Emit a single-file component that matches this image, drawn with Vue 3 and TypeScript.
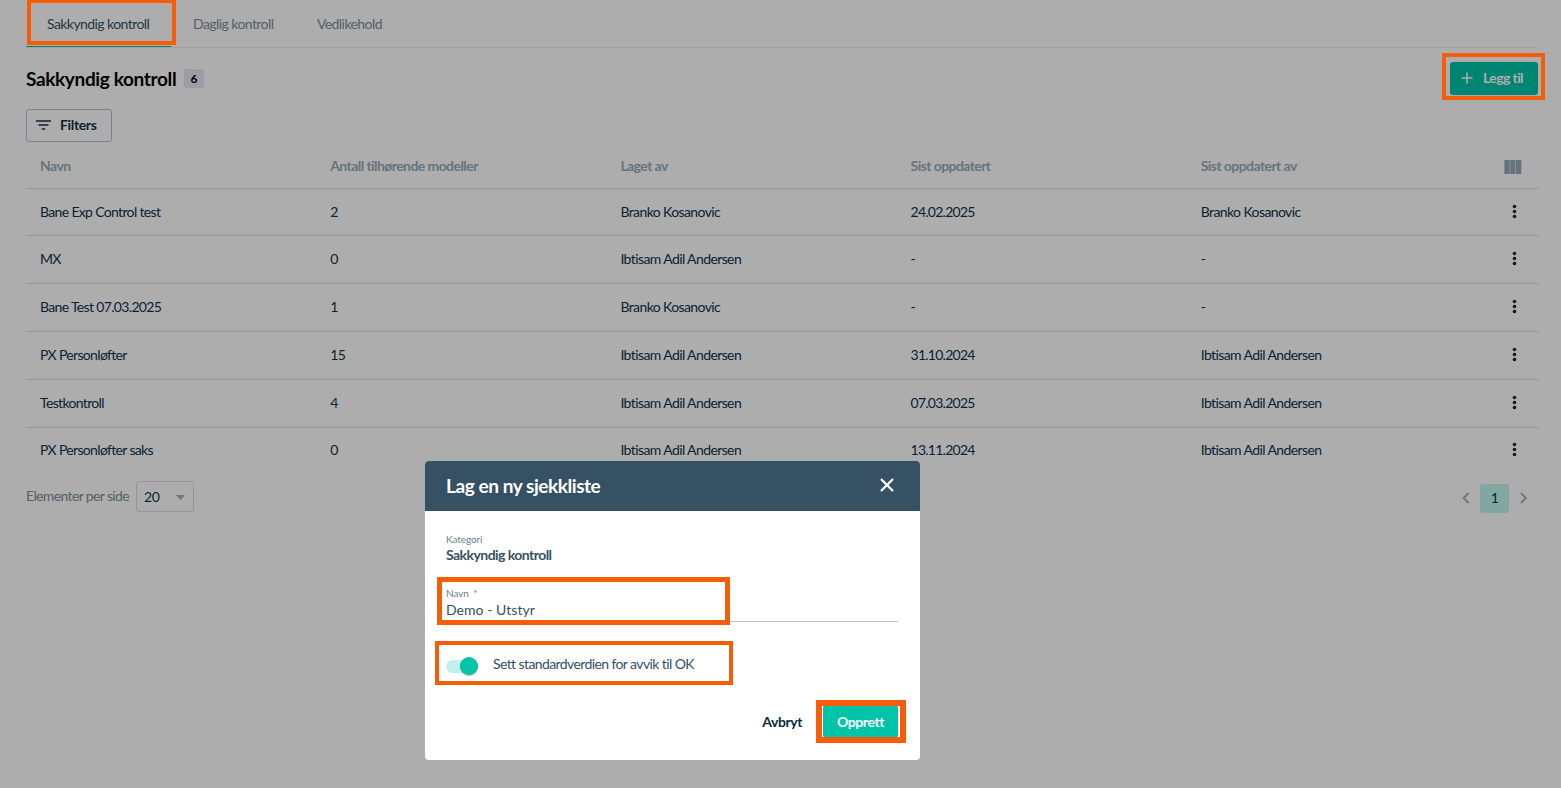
<script setup lang="ts">
interface Row {
  name: string
  models: number
  author: string
  updated: string
  updatedBy: string
}

const tabs: string[] = ['Sakkyndig kontroll', 'Daglig kontroll', 'Vedlikehold']
const columns: string[] = ['Navn', 'Antall tilhørende modeller', 'Laget av', 'Sist oppdatert', 'Sist oppdatert av']
const branko = 'Branko Kosanovic'
const ibtisam = 'Ibtisam Adil Andersen'
const rows: Row[] = [
  { name: 'Bane Exp Control test', models: 2, author: branko, updated: '24.02.2025', updatedBy: branko },
  { name: 'MX', models: 0, author: ibtisam, updated: '-', updatedBy: '-' },
  { name: 'Bane Test 07.03.2025', models: 1, author: branko, updated: '-', updatedBy: '-' },
  { name: 'PX Personløfter', models: 15, author: ibtisam, updated: '31.10.2024', updatedBy: ibtisam },
  { name: 'Testkontroll', models: 4, author: ibtisam, updated: '07.03.2025', updatedBy: ibtisam },
  { name: 'PX Personløfter saks', models: 0, author: ibtisam, updated: '13.11.2024', updatedBy: ibtisam },
]
</script>

<template>
  <div class="page">
    <nav class="tabs">
      <a v-for="(tab, i) in tabs" :key="tab" class="tab" :class="{ active: i === 0 }">{{ tab }}</a>
    </nav>

    <header class="title-bar">
      <h1>Sakkyndig kontroll</h1>
      <span class="count">6</span>
      <button class="add">
        <svg width="12" height="12" viewBox="0 0 12 12"><path d="M6 .5v11M.5 6h11" stroke="#adadad" stroke-width="1.6" fill="none" /></svg>
        <span class="btn-text">Legg til</span>
      </button>
    </header>

    <button class="filters">
      <svg width="15" height="10" viewBox="0 0 15 10"><path d="M0 1h15M2.5 5h10M5.8 9h3.4" stroke="#0b2230" stroke-width="1.4" fill="none" /></svg>
      <span class="btn-text">Filters</span>
    </button>

    <section class="table">
      <div class="row head">
        <div v-for="c in columns" :key="c" class="cell">{{ c }}</div>
        <div class="action">
          <svg width="18" height="14" viewBox="0 0 18 14"><path d="M.4 0h5.300v14h-5.300zM6.200 0h5.300v14h-5.300zM12 0h5.300v14h-5.300z" fill="#65747c" /></svg>
        </div>
      </div>
      <div v-for="r in rows" :key="r.name" class="row">
        <div class="cell">{{ r.name }}</div>
        <div class="cell">{{ r.models }}</div>
        <div class="cell person">{{ r.author }}</div>
        <div class="cell date">{{ r.updated }}</div>
        <div class="cell person">{{ r.updatedBy }}</div>
        <div class="action dots">
          <svg width="5" height="15" viewBox="0 0 5 15" fill="#071c27"><circle cx="2.5" cy="2.5" r="1.8" /><circle cx="2.5" cy="7.5" r="1.8" /><circle cx="2.5" cy="12.5" r="1.8" /></svg>
        </div>
      </div>
    </section>

    <footer class="footer">
      <span class="per-page">Elementer per side</span>
      <div class="select"><span>20</span><svg width="9" height="5" viewBox="0 0 9 5"><path d="M0 0h9L4.5 5z" fill="#71757e" /></svg></div>
      <div class="pager">
        <svg width="8" height="12" viewBox="0 0 8 12"><path d="M6.600 1L1.600 6l5 5" stroke="#6c777e" stroke-width="1.900" fill="none" /></svg>
        <span class="current">1</span>
        <svg width="8" height="12" viewBox="0 0 8 12"><path d="M1.900 1l5 5-5 5" stroke="#6c777e" stroke-width="1.900" fill="none" /></svg>
      </div>
    </footer>

    <div class="dialog">
      <div class="dialog-head">
        <h2>Lag en ny sjekkliste</h2>
        <svg width="14" height="14" viewBox="0 0 14 14"><path d="M1 1l12 12M13 1L1 13" stroke="#fff" stroke-width="2.3" fill="none" /></svg>
      </div>
      <div class="dialog-body">
        <div class="label">Kategori</div>
        <div class="category">Sakkyndig kontroll</div>
        <div class="field">
          <div class="label">Navn <span class="star">*</span></div>
          <div class="value">Demo - Utstyr</div>
        </div>
        <div class="switch-row">
          <span class="track"><span class="thumb"></span></span>
          <span class="switch-text">Sett standardverdien for avvik til OK</span>
        </div>
        <div class="actions">
          <span class="cancel">Avbryt</span>
          <button class="create">Opprett</button>
        </div>
      </div>
    </div>

    <i class="mark mark-tab"></i>
    <i class="mark mark-add"></i>
    <i class="mark mark-name"></i>
    <i class="mark mark-switch"></i>
    <i class="mark mark-create"></i>
  </div>
</template>

<style>
html,
body {
  margin: 0;
  background: #adadad;
  overflow: hidden;
}
</style>

<style scoped>
* {
  box-sizing: border-box;
}
.page {
  position: relative;
  width: 1561px;
  height: 788px;
  padding: 0 23px 0 26px;
  background: #adadad;
  font-family: Lato, "Open Sans", sans-serif;
  font-size: 14px;
  letter-spacing: -0.6px;
  color: #0b2230;
  overflow: hidden;
  white-space: nowrap;
}
button {
  font: inherit;
  letter-spacing: inherit;
  padding: 0;
}
svg {
  display: block;
  flex: none;
}
.tabs {
  display: flex;
  height: 48px;
  border-bottom: 1px solid #a0a2a4;
}
.tab {
  height: 47px;
  line-height: 48px;
  padding: 0 21.5px 0 22px;
  color: #526067;
  letter-spacing: -0.57px;
}
.tab.active {
  width: 145px;
  padding-left: 21px;
  color: #233743;
  border-bottom: 1px solid #008572;
}
.title-bar {
  display: flex;
  align-items: center;
  height: 61px;
}
h1 {
  margin: 0;
  font-size: 19px;
  font-weight: 700;
  letter-spacing: -0.35px;
  color: #000;
  width: 158px;
}
.count {
  width: 20px;
  height: 19px;
  border-radius: 3px;
  background: #9c9ea4;
  color: #000;
  font-size: 12px;
  font-weight: 700;
  line-height: 19px;
  letter-spacing: 0;
  text-align: center;
}
.btn-text {
  padding-bottom: 2px;
}
.add {
  display: flex;
  align-items: center;
  gap: 10px;
  width: 88px;
  height: 33px;
  margin-left: auto;
  padding-left: 11px;
  border: 0;
  border-radius: 3px;
  background: #008572;
  color: #adadad;
  font-weight: 700;
}
.add svg {
  margin-bottom: 2px;
}
.filters {
  display: flex;
  align-items: center;
  gap: 9px;
  width: 86px;
  height: 33px;
  padding-left: 9px;
  border: 1px solid #7c7f8d;
  border-radius: 3px;
  background: none;
  color: #0b2230;
  font-weight: 700;
  letter-spacing: -0.35px;
}
.filters svg {
  margin-bottom: 2px;
}
.table {
  margin-top: 3px;
}
.row {
  display: grid;
  grid-template-columns: repeat(5, 290.2px) 61px;
  align-items: center;
  height: 48px;
  padding-bottom: 2px;
  border-bottom: 1px solid #939599;
}
.row:nth-child(2) {
  height: 47px;
}
.row:last-child {
  height: 47px;
  padding-bottom: 4px;
  border-bottom: 0;
}
.head {
  height: 44px;
  color: #65747c;
  font-weight: 700;
}
.cell {
  padding-left: 14px;
  letter-spacing: -0.66px;
}
.head .cell {
  letter-spacing: -0.57px;
}
.person {
  letter-spacing: -0.6px;
}
.date {
  letter-spacing: -0.75px;
}
.action {
  padding-left: 27px;
}
.head .action {
  padding-top: 2px;
}
.dots {
  padding-left: 35px;
}
.footer {
  display: flex;
  align-items: flex-start;
  height: 33px;
  margin-top: 6px;
}
.per-page {
  width: 110px;
  line-height: 30px;
  letter-spacing: -0.63px;
  color: #526067;
}
.select {
  display: flex;
  align-items: center;
  justify-content: space-between;
  width: 58px;
  height: 31px;
  padding: 0 8px 0 7px;
  border: 1px solid #93959a;
  border-radius: 3px;
  letter-spacing: -0.3px;
}
.select span {
  padding-bottom: 1px;
}
.select svg {
  margin-top: 2px;
}
.pager {
  display: flex;
  align-items: center;
  gap: 10px;
  margin: 3px 11px 0 auto;
}
.pager svg {
  margin-bottom: 1px;
}
.current {
  width: 29px;
  height: 29px;
  border-radius: 3px;
  background: #82a7a1;
  line-height: 28px;
  text-align: center;
}
.dialog {
  position: absolute;
  left: 425px;
  top: 461px;
  width: 495px;
  height: 299px;
  border-radius: 4px;
  background: #fff;
  overflow: hidden;
  color: #355163;
}
.dialog-head {
  display: flex;
  align-items: center;
  justify-content: space-between;
  height: 50px;
  padding: 0 26px 2px 21px;
  background: #355163;
}
h2 {
  margin: 0;
  font-size: 19px;
  font-weight: 700;
  letter-spacing: -0.43px;
  color: #fff;
}
.dialog-body {
  padding: 22px 22px 0 21px;
}
.label {
  font-size: 10px;
  line-height: 13px;
  letter-spacing: -0.1px;
  color: #6b7e8a;
}
.star {
  margin-left: 2px;
}
.category {
  height: 19px;
  line-height: 18px;
  font-weight: 700;
  letter-spacing: -0.55px;
}
.field {
  height: 57px;
  padding-top: 22px;
  border-bottom: 1px solid #bec2ca;
}
.value {
  line-height: 20px;
  letter-spacing: 0.05px;
}
.switch-row {
  display: flex;
  align-items: center;
  height: 44px;
  margin-top: 22px;
}
.switch-text {
  padding-bottom: 5px;
}
.track {
  width: 30px;
  height: 13px;
  border-radius: 7px;
  background: #bff0e9;
  margin-right: 17px;
}
.thumb {
  display: block;
  width: 18px;
  height: 18px;
  margin: -3px 0 0 14.4px;
  border-radius: 50%;
  background: #00c4a8;
  box-shadow: 0 1px 1px rgba(0, 0, 0, 0.3);
}
.actions {
  display: flex;
  align-items: center;
  justify-content: flex-end;
  gap: 21px;
  height: 33px;
  margin-top: 17px;
  color: #0b2b3e;
  font-weight: 700;
  letter-spacing: -0.43px;
}
.create {
  width: 75px;
  height: 33px;
  border: 0;
  border-radius: 3px;
  background: #00c4a8;
  color: #fff;
  text-align: center;
}
.mark {
  position: absolute;
  border: 4px solid #f55d09;
}
.mark-tab {
  left: 27px;
  top: -1px;
  width: 149px;
  height: 46px;
}
.mark-add {
  left: 1442px;
  top: 53px;
  width: 103px;
  height: 47px;
}
.mark-name {
  left: 437px;
  top: 577px;
  width: 293px;
  height: 48px;
  border-width: 5px;
}
.mark-switch {
  left: 435px;
  top: 641px;
  width: 298px;
  height: 44px;
}
.mark-create {
  left: 816px;
  top: 700px;
  width: 90px;
  height: 43px;
  border-width: 6px;
}
</style>
